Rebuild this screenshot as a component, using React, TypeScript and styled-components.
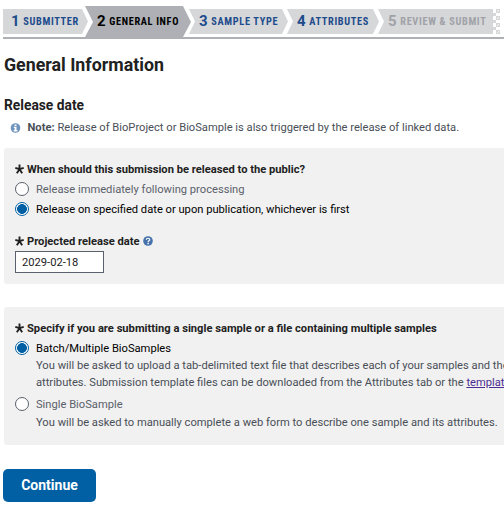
import React from "react";
import styled, { createGlobalStyle } from "styled-components";

const Global = createGlobalStyle`
  * { box-sizing: border-box; }
  body { margin: 0; background: #fff; overflow: hidden; }
`;

const Page = styled.main`
  width: 504px;
  height: 508px;
  padding: 6px 0 0 3px;
  overflow: hidden;
  font-family: Roboto, sans-serif;
  font-size: 11.17px;
  color: #212121;
`;

const Steps = styled.nav`
  display: flex;
  align-items: flex-start;
  height: 33px;
  border-bottom: 2px solid #aeb0b5;
`;

type StepState = "first" | "normal" | "active" | "last";

const Step = styled.div<{ $w: number; $gap: number; $state: StepState }>`
  display: flex;
  flex: none;
  align-items: flex-start;
  width: ${(p) => p.$w}px;
  height: ${(p) => (p.$state === "active" ? 33 : 25)}px;
  margin: ${(p) => (p.$state === "active" ? 0 : 3)}px 0 0 ${(p) => p.$gap}px;
  padding: ${(p) => (p.$state === "active" ? 6 : 3)}px 0 0 ${(p) => (p.$state === "first" ? 8 : p.$state === "active" ? 12 : 10)}px;
  background: ${(p) => (p.$state === "active" ? "#aeb0b5" : "#d6d7d9")};
  color: ${(p) => (p.$state === "active" ? "#000" : p.$state === "last" ? "#a0a2a8" : "#1d4b8c")};
  white-space: nowrap;
  clip-path: ${(p) =>
    p.$state === "first"
      ? "polygon(0 0, calc(100% - 6px) 0, 100% 50%, calc(100% - 6px) 100%, 0 100%)"
      : p.$state === "active"
      ? "polygon(0 0, calc(100% - 8px) 0, 100% 16px, calc(100% - 8px) 31px, calc(100% - 8px) 100%, 0 100%, 0 31px, 8px 16px)"
      : p.$state === "last"
      ? "polygon(0 0, 100% 0, 100% 100%, 0 100%, 6px 50%)"
      : "polygon(0 0, calc(100% - 6px) 0, 100% 50%, calc(100% - 6px) 100%, 0 100%, 6px 50%)"};
`;

const StepNumber = styled.span`
  width: 12.3px;
  font-size: 15px;
  line-height: 18px;
  font-weight: 700;
`;

const StepName = styled.span`
  font-family: "Roboto Condensed", Roboto, sans-serif;
  font-stretch: 75%;
  font-size: 10.3px;
  line-height: 19px;
  font-weight: 700;
  letter-spacing: 0.66px;
`;

const TornEdge = styled.svg`
  display: block;
  flex: none;
  margin-top: 3px;
`;

const Title = styled.h1`
  margin: 14px 0 0 1px;
  font-size: 17.8px;
  line-height: 24px;
  font-weight: 700;
`;

const Subtitle = styled.h2`
  margin: 18px 0 0 1px;
  font-size: 13.8px;
  line-height: 20px;
  font-weight: 700;
`;

const Note = styled.p`
  display: flex;
  align-items: center;
  margin: 5px 0 0 7px;
  line-height: 16px;
  color: #494f57;
  white-space: nowrap;

  svg { margin-right: 6.5px; }
`;

const Panel = styled.section<{ $h: number; $top: number }>`
  width: 520px;
  height: ${(p) => p.$h}px;
  margin: ${(p) => p.$top}px 0 0 1px;
  padding: 13px 0 0 11px;
  border-radius: 3px;
  background: #f1f1f1;
`;

const Legend = styled.div<{ $top?: number }>`
  display: flex;
  align-items: center;
  height: 16px;
  margin-top: ${(p) => p.$top ?? 0}px;
  font-weight: 700;
  white-space: nowrap;

  svg { flex: none; }
  svg:first-child { margin-right: 3px; }
`;

const Choice = styled.label<{ $selected?: boolean; $top: number }>`
  display: flex;
  align-items: center;
  height: 16px;
  margin-top: ${(p) => p.$top}px;
  color: ${(p) => (p.$selected ? "#000" : "#5b616b")};
  white-space: nowrap;
`;

const Radio = styled.input`
  appearance: none;
  flex: none;
  width: 14px;
  height: 14px;
  margin: 0 7px 0 0;
  border: 1px solid #5b616b;
  border-radius: 50%;
  background: #fff;

  &:checked {
    border-color: #0060a3;
    background: radial-gradient(circle, #0060a3 4.6px, #fff 5.2px);
  }
`;

const Help = styled.p<{ $top: number }>`
  margin: ${(p) => p.$top}px 0 0 21px;
  line-height: 17px;
  color: #494f57;
  white-space: nowrap;
`;

const TemplateLink = styled.a`
  color: #4c2c92;
  text-decoration: underline;
`;

const DateInput = styled.input`
  display: block;
  width: 89px;
  height: 22px;
  margin-top: 2px;
  padding: 0 6px;
  border: 1px solid #5b616b;
  border-radius: 0;
  background: #fff;
  color: #212121;
  font: 11.17px Roboto, sans-serif;
`;

const Continue = styled.button`
  display: block;
  width: 93px;
  height: 33px;
  margin-top: 24px;
  padding: 0 0 2px;
  border: 0;
  border-radius: 5px;
  background: #0060a3;
  color: #fff;
  font: 700 14px Roboto, sans-serif;
`;

const HelpSlot = styled.span`
  display: flex;
  margin-left: 3px;
`;

const Star = () => (
  <svg width="9" height="10" viewBox="0 0 9 10" stroke="#212121" strokeWidth="1.9" fill="none">
    <path d="M4.5 5.2V.6M4.5 5.2L.3 3.9M4.5 5.2L8.7 3.9M4.5 5.2L1.8 9.2M4.5 5.2L7.2 9.2" />
  </svg>
);

const InfoIcon = () => (
  <svg width="11" height="10" viewBox="0 0 11 10">
    <circle cx="5.5" cy="5" r="4.8" fill="#6e93bd" />
    <path d="M4.6 1.4h1.9v1.5H4.6zM3.8 3.8h2.7v3.3h.9v1.3H3.7V7.1h.9V5.1h-.8z" fill="#fff" />
  </svg>
);

const HelpIcon = () => (
  <svg width="10" height="10" viewBox="0 0 10 10">
    <circle cx="5" cy="5" r="4.8" fill="#4773aa" />
    <path d="M3.3 3.8C3.4 1.7 6.8 1.8 6.7 3.7 6.7 4.8 5.1 4.8 5.1 6" stroke="#fff" strokeWidth="1.2" fill="none" />
    <path d="M4.4 6.8h1.4v1.4H4.4z" fill="#fff" />
  </svg>
);

const steps: { name: string; w: number; gap: number; state: StepState }[] = [
  { name: "SUBMITTER", w: 85, gap: 0, state: "first" },
  { name: "GENERAL INFO", w: 106, gap: -3, state: "active" },
  { name: "SAMPLE TYPE", w: 99, gap: -2, state: "normal" },
  { name: "ATTRIBUTES", w: 92, gap: -1, state: "normal" },
  { name: "REVIEW & SUBMIT", w: 115, gap: -1, state: "last" },
];

export default function App() {
  return (
    <>
      <Global />
      <Page>
        <Steps>
          {steps.map((s, i) => (
            <Step key={s.name} $w={s.w} $gap={s.gap} $state={s.state}>
              <StepNumber>{i + 1}</StepNumber>
              <StepName>{s.name}</StepName>
            </Step>
          ))}
          <TornEdge width="7" height="25" viewBox="0 0 7 25" fill="#d6d7d9">
            <path d="M0 4h3v3H0zM0 11h3v3H0zM0 18h3v3H0z" />
            <path d="M3 0h4v4H3zM3 7h4v4H3zM3 14h4v4H3zM3 21h4v4H3z" />
            <path d="M4 3l2-2M4 10l2-2M4 17l2-2M4 24l2-2" stroke="#fff" strokeWidth="0.8" />
          </TornEdge>
        </Steps>

        <Title>General Information</Title>
        <Subtitle>Release date</Subtitle>
        <Note>
          <InfoIcon />
          <span><b>Note:</b> Release of BioProject or BioSample is also triggered by the release of linked data.</span>
        </Note>

        <Panel $h={136} $top={12}>
          <Legend><Star />When should this submission be released to the public?</Legend>
          <Choice $top={4}>
            <Radio type="radio" name="release" />Release immediately following processing
          </Choice>
          <Choice $top={4} $selected>
            <Radio type="radio" name="release" defaultChecked />Release on specified date or upon publication, whichever is first
          </Choice>
          <Legend $top={16}><Star />Projected release date<HelpSlot><HelpIcon /></HelpSlot></Legend>
          <DateInput defaultValue="2029-02-18" />
        </Panel>

        <Panel $h={138} $top={23}>
          <Legend><Star />Specify if you are submitting a single sample or a file containing multiple samples</Legend>
          <Choice $top={4} $selected>
            <Radio type="radio" name="count" defaultChecked />Batch/Multiple BioSamples
          </Choice>
          <Help $top={1}>
            You will be asked to upload a tab-delimited text file that describes each of your samples and their<br />
            attributes. Submission template files can be downloaded from the Attributes tab or the <TemplateLink>template</TemplateLink>
          </Help>
          <Choice $top={5}>
            <Radio type="radio" name="count" />Single BioSample
          </Choice>
          <Help $top={2}>You will be asked to manually complete a web form to describe one sample and its attributes.</Help>
        </Panel>

        <Continue type="button">Continue</Continue>
      </Page>
    </>
  );
}
